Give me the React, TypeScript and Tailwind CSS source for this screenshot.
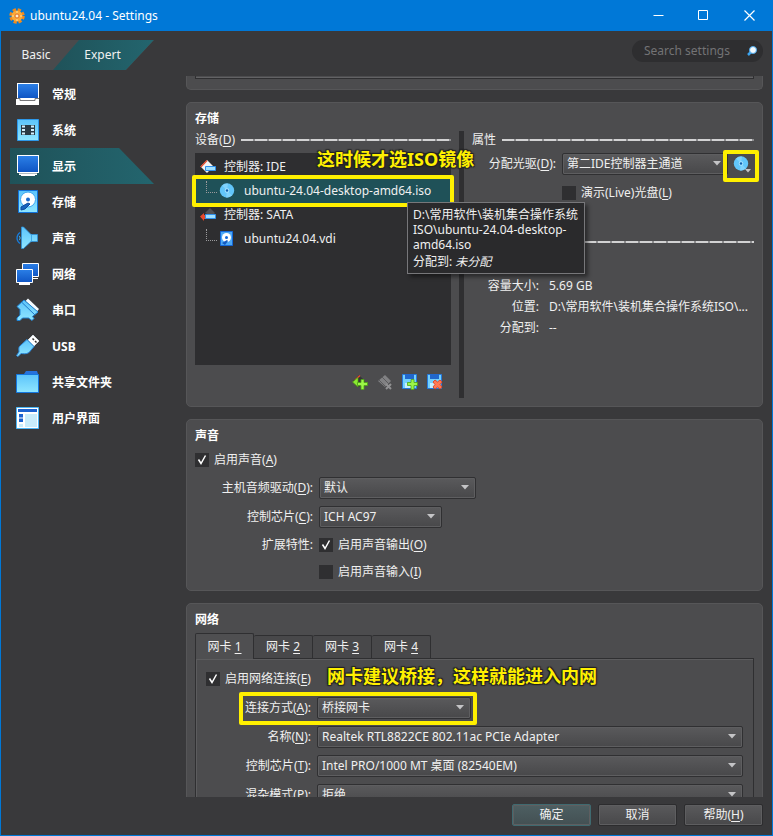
import type { ReactNode } from 'react';

const navItems = [
  { id: 'general', label: '常规' },
  { id: 'system', label: '系统' },
  { id: 'display', label: '显示' },
  { id: 'storage', label: '存储' },
  { id: 'audio', label: '声音' },
  { id: 'network', label: '网络' },
  { id: 'serial', label: '串口' },
  { id: 'usb', label: 'USB' },
  { id: 'folders', label: '共享文件夹' },
  { id: 'ui', label: '用户界面' },
];

function NavIcon({ id }: { id: string }) {
  return (
    <svg viewBox="0 0 24 24" className="size-6 shrink-0">
      <defs>
        <linearGradient id="cyan" x1="0" y1="0" x2="0" y2="1">
          <stop offset="0" stopColor="#5cc4fb" />
          <stop offset="1" stopColor="#8fe6ff" />
        </linearGradient>
        <linearGradient id="blue" x1="0" y1="0" x2="0" y2="1">
          <stop offset="0" stopColor="#2b7fe6" />
          <stop offset="1" stopColor="#0f55c4" />
        </linearGradient>
      </defs>
      {id === 'general' && (
        <>
          <path d="M1 1h22v22H0v-6h1z" fill="#fff" />
          <path d="M2 2h20v14H2z" fill="url(#blue)" />
          <path d="M1 16.500h3v2h15v-2h4" fill="none" stroke="#77777a" />
        </>
      )}
      {id === 'system' && (
        <>
          <path d="M1.500 1.500h21v21h-21z" fill="url(#cyan)" stroke="#2d98ea" />
          <path d="M5 7h14v10H5z" fill="#2a3a44" />
          <path d="M6 8.500h3M6 12h3M6 15.500h3M15 8.500h3M15 12h3M15 15.500h3" stroke="#d4f1ff" strokeWidth="2" />
        </>
      )}
      {id === 'display' && (
        <>
          <path d="M1 1h22v18h-2v2h-2v1H5v-1H3v-2H1z" fill="#fff" />
          <path d="M2 2h20v16H2z" fill="url(#blue)" />
          <path d="M3 19.500h18" stroke="#b4bcc0" />
        </>
      )}
      {id === 'storage' && (
        <>
          <path d="M2.500 .500h19v22h-19z" fill="url(#cyan)" stroke="#1173dc" />
          <circle cx="12" cy="9.500" r="7.500" fill="#fff" stroke="#3da5f0" />
          <circle cx="12" cy="9.500" r="2" fill="#1769cf" />
          <path d="M5 17l7-4 2 1-5 5-4 1z" fill="#1663bd" stroke="#0d4a9d" />
        </>
      )}
      {id === 'audio' && (
        <>
          <path d="M4 6.500c-4 3-4 8 0 11" fill="none" stroke="#187bd8" strokeWidth="1.300" />
          <path d="M5.500 1h2L15 8.500h6.500v7H15L7.500 22.500h-2z" fill="url(#cyan)" stroke="#2d92dc" strokeWidth=".8" />
          <path d="M15.500 8.500v7" stroke="#3fa9e8" />
          <path d="M3 10c1.500 0 1.500 4 0 4" fill="none" stroke="#42b7fa" />
        </>
      )}
      {id === 'network' && (
        <>
          <path d="M6.500 1.500h16v13h-16z" fill="url(#blue)" stroke="#fff" />
          <path d="M17 16.500h5" stroke="#fff" />
          <path d="M.500 7.500h16v13H.500z" fill="url(#blue)" stroke="#fff" />
          <path d="M3 22h11" stroke="#fff" strokeWidth="2" />
        </>
      )}
      {id === 'serial' && (
        <>
          <path d="M12 .500L23 11l-2 2.500L9.500 3z" fill="#f4fbff" />
          <path d="M8 2L1 8.500l3 3V17l-3 3v2.500h3l2.500-2.500h6l3.500 2.500 2-2-1.500-2L22 14z" fill="url(#cyan)" stroke="#2184d4" />
          <path d="M6 4.500L19 17" stroke="#1d78c8" fill="none" />
        </>
      )}
      {id === 'usb' && (
        <>
          <path d="M17 1l6 6-5 5-6-6z" fill="#fff" stroke="#d0d8dc" />
          <path d="M16.500 4.500l1.500 1.500M19 7l1.500 1.500" stroke="#333" strokeWidth="1.500" />
          <path d="M11 5.500l7 7-5 6c-3 2-6 1-8 1l-3 3-1.500-1L3 18c0-3-1-5 2-7z" fill="url(#cyan)" stroke="#2a86d8" />
        </>
      )}
      {id === 'folders' && (
        <>
          <path d="M8 4l2-3h11l1 3v3H8z" fill="#2672dc" />
          <path d="M.500 4.500h22v18H.500z" fill="url(#cyan)" stroke="#1477e0" />
        </>
      )}
      {id === 'ui' && (
        <>
          <path d="M.500 1.500h22v21H.500z" fill="#fff" stroke="#4bb6f6" />
          <path d="M2 3h19v3H2z" fill="#1c62cf" />
          <path d="M9 8h12v13H9z" fill="#c9edfb" />
          <path d="M3 8h4v3.500H3zM3 12.500h4V16H3z" fill="#1c62cf" />
          <path d="M3 18h4v3H3z" fill="#c9edfb" />
        </>
      )}
    </svg>
  );
}

function DiscIcon() {
  return (
    <svg viewBox="0 0 16 16" className="size-4 shrink-0">
      <circle cx="8" cy="7.500" r="7.200" fill="#62c6fa" />
      <path d="M8 7.500L3 2.500a7 7 0 0 1 6-2zM8 7.500l5 5a7 7 0 0 1-6 2z" fill="#9be0ff" opacity=".5" />
      <circle cx="8" cy="7.500" r="2.200" fill="#a8e4ff" />
      <circle cx="8" cy="7.500" r="1.200" fill="#0f5fae" />
    </svg>
  );
}

function HardDiskIcon() {
  return (
    <svg viewBox="0 0 16 16" className="size-4 shrink-0">
      <path d="M1.500 .500h12v14h-12z" fill="#4da8f5" stroke="#1467d8" />
      <circle cx="7.500" cy="6.500" r="4.500" fill="#fff" />
      <circle cx="7.500" cy="6.500" r="1.500" fill="#1467d8" />
      <path d="M3 12l5-3 1 1-3 4z" fill="#145ac0" />
    </svg>
  );
}

function ControllerIcon({ sata }: { sata?: boolean }) {
  return (
    <svg viewBox="0 0 16 16" className="size-4 shrink-0">
      {sata ? (
        <>
          <path d="M5 6l5-5 5 5-3 3z" fill="#505053" />
          <path d="M0 9.500l4-3.500v2h3v4H4v2z" fill="#e5482c" />
        </>
      ) : (
        <>
          <path d="M7 1l6.500 6.500L7 14 .500 7.500z" fill="#f2f2f2" />
          <path d="M.800 8L7 1.500" stroke="#e5482c" strokeWidth="1.300" />
        </>
      )}
      <path d="M5.500 7.500h10v4h-10z" fill="#9fe0ff" stroke="#2f8fec" />
    </svg>
  );
}

function ToolIcon({ kind }: { kind: string }) {
  return (
    <svg viewBox="0 0 16 16" className="size-4">
      {kind === 'add-controller' && (
        <>
          <path d="M7 1l6 6-6 6-6-6z" fill="#353537" />
          <path d="M8 1.500L3 6" stroke="#e74a2c" strokeWidth="1.500" fill="none" />
          <path d="M.500 8L6 3.500V13z" fill="#8ae832" stroke="#4f9d10" strokeWidth=".7" />
        </>
      )}
      {kind === 'remove-controller' && (
        <>
          <path d="M8 1l6 6-6 6-7-6z" fill="#818183" />
          <path d="M5 3l9 9M2 6l8 8" stroke="#5b5b5d" />
          <path d="M9 10l5 5M14 10l-5 5" stroke="#919193" strokeWidth="2" />
        </>
      )}
      {(kind === 'add-disk' || kind === 'remove-disk') && (
        <>
          <path d="M.500 .500h14v14H.500z" fill="#73d1ff" stroke="#2679dd" />
          <path d="M3 0h9v5H3z" fill="#2167cc" />
          <path d="M3 9h7v5H3z" fill="#c6efff" />
        </>
      )}
      {kind.startsWith('add') && (
        <path d="M9 5.500h3v3h3.500v3H12v4H9v-4H5.500v-3H9z" fill="#9cf548" stroke="#4ba313" strokeWidth=".8" />
      )}
      {kind === 'remove-disk' && (
        <path d="M6 8l2-2 2.500 2L13 6l2 2-2 2.500L15 13l-2 2-2.500-2L8 15l-2-2 2-2.500z" fill="#ff7a55" stroke="#e04a2c" />
      )}
    </svg>
  );
}

function Key({ children }: { children: string }) {
  return <>(<span className="underline underline-offset-2">{children}</span>)</>;
}

function Rule() {
  return (
    <span className="h-[2px] flex-1 bg-[repeating-linear-gradient(90deg,#d2d2d3_0_12px,#8c8c8e_12px_14px)]" />
  );
}

function Card({ title, children }: { title: string; children: ReactNode }) {
  return (
    <section className="shrink-0 rounded-[5px] border border-[#565658] bg-[#4c4c4e] p-2">
      <h2 className="font-bold text-white">{title}</h2>
      {children}
    </section>
  );
}

function Combo({ id, value, className = '' }: { id: string; value: string; className?: string }) {
  return (
    <div className={`relative ${className}`}>
      <select
        id={id}
        className="block h-[22px] w-full appearance-none truncate rounded-[2px] border border-[#303032] bg-linear-to-b from-[#5a5a5c] to-[#48484a] pr-5 pl-1 shadow-[inset_0_0_0_1px_#5e5e60] outline-none"
      >
        <option>{value}</option>
      </select>
      <svg viewBox="0 0 8 5" className="pointer-events-none absolute top-2 right-[7px] h-[5px] w-2">
        <path d="M0 0h8L4 4.500z" fill="#c4c4c6" />
      </svg>
    </div>
  );
}

function Check({ id, checked, children }: { id: string; checked?: boolean; children: ReactNode }) {
  return (
    <div className="flex items-center gap-[5px]">
      <span className="relative size-[14px]">
        <input
          id={id}
          type="checkbox"
          defaultChecked={checked}
          className="peer block size-[14px] appearance-none bg-[#2f2f31]"
        />
        <svg
          viewBox="0 0 14 14"
          className="pointer-events-none absolute inset-0 hidden size-[14px] peer-checked:block"
        >
          <path d="M3.500 6.500l2.500 4 4.500-8" fill="none" stroke="#fff" strokeWidth="1.500" />
        </svg>
      </span>
      <label htmlFor={id}>{children}</label>
    </div>
  );
}

function TitleBar() {
  return (
    <header className="flex h-[31px] shrink-0 items-center bg-[#0078d7] pl-2 text-white">
      <svg viewBox="0 0 16 16" className="size-4">
        <circle cx="8" cy="8" r="6" fill="none" stroke="#f08a1c" strokeWidth="3.500" strokeDasharray="3 1.712" />
        <circle cx="8" cy="8" r="5.500" fill="#f9a838" />
        <circle cx="8" cy="8" r="2" fill="#fff0c8" stroke="#e0702c" />
        <path d="M8 3v2M8 11v2M3 8h2M11 8h2" stroke="#ffe39b" />
      </svg>
      <h1 className="ml-[5px] flex-1">ubuntu24.04 - Settings</h1>
      <button aria-label="Minimize" className="flex h-full w-[45px] items-center justify-center">
        <svg viewBox="0 0 11 11" className="size-[11px]"><path d="M.500 5.500h10" stroke="#fff" /></svg>
      </button>
      <button aria-label="Maximize" className="flex h-full w-[45px] items-center justify-center">
        <svg viewBox="0 0 11 11" className="size-[11px]"><path d="M.500 .500h9v9h-9z" fill="none" stroke="#fff" /></svg>
      </button>
      <button aria-label="Close" className="flex h-full w-[46px] items-center justify-center">
        <svg viewBox="0 0 11 11" className="size-[11px]"><path d="M.500 .500l10 10M10.500 .500l-10 10" stroke="#fff" strokeWidth="1.200" /></svg>
      </button>
    </header>
  );
}

function Sidebar() {
  return (
    <nav className="w-36 shrink-0">
      <ul>
        {navItems.map(({ id, label }) => (
          <li key={id}>
            <a
              href={`#${id}`}
              className={`flex h-9 items-center gap-3 pl-[6px] font-bold text-white ${
                id === 'display'
                  ? 'bg-linear-to-r from-[#1f5259] to-[#23656e] [clip-path:polygon(0_0,109px_0,100%_100%,0_100%)]'
                  : ''
              }`}
            >
              <NavIcon id={id} />
              <span className="pt-[2px]">{label}</span>
            </a>
          </li>
        ))}
      </ul>
    </nav>
  );
}

function StorageCard() {
  return (
    <Card title="存储">
      <div className="mt-1 flex gap-2">
        <div className="min-w-0 flex-[256]">
          <div className="mb-1 flex h-[18px] items-center gap-[6px]">
            <span>设备<Key>D</Key></span>
            <Rule />
          </div>
          <div className="relative h-[212px] bg-[#2e2e30] pt-[2px]">
            <ul className="text-[#f0f0f0]">
              <li className="flex h-6 items-center gap-2 pl-[5px]">
                <ControllerIcon />控制器: IDE
              </li>
              <li className="relative flex h-6 items-center bg-[#1f5158] pl-[11px]">
                <span className="mb-2 h-3 w-[11px] border-b border-l border-dotted border-[#9a9a9c]" />
                <span className="ml-[2px]"><DiscIcon /></span>
                <span className="ml-[9px]">ubuntu-24.04-desktop-amd64.iso</span>
                <span className="absolute -inset-x-[3px] -inset-y-1 rounded-[2px] border-4 border-[#fff000]" />
              </li>
              <li className="flex h-6 items-center gap-2 pl-[5px]">
                <ControllerIcon sata />控制器: SATA
              </li>
              <li className="flex h-6 items-center pl-[11px]">
                <span className="mb-2 h-3 w-[11px] border-b border-l border-dotted border-[#9a9a9c]" />
                <span className="ml-[2px]"><HardDiskIcon /></span>
                <span className="ml-[9px]">ubuntu24.04.vdi</span>
              </li>
            </ul>
            <Note className="-top-[6px] left-[122px]">这时候才选ISO镜像</Note>
            <div
              role="tooltip"
              className="absolute top-[49px] left-[212px] z-10 w-[178px] border border-[#77777a] bg-[#2a2a2c] px-[5px] pt-1 pb-1 leading-[15px] text-[#f0f0f0] shadow-[3px_3px_4px_rgba(0,0,0,0.45)]"
            >
              <p className="whitespace-nowrap">D:\常用软件\装机集合操作系统<br />ISO\ubuntu-24.04-desktop-<br />amd64.iso</p>
              <p className="mt-[2px]">分配到: <i>未分配</i></p>
            </div>
          </div>
          <div className="mt-2 flex h-[18px] justify-end gap-[9px] pr-2">
            <button aria-label="添加控制器"><ToolIcon kind="add-controller" /></button>
            <button aria-label="移除控制器" disabled><ToolIcon kind="remove-controller" /></button>
            <button aria-label="添加附件"><ToolIcon kind="add-disk" /></button>
            <button aria-label="移除附件"><ToolIcon kind="remove-disk" /></button>
          </div>
        </div>
        <div className="h-[267px] w-[5px] bg-[#2f2f31]" />
        <div className="min-w-0 flex-[282]">
          <div className="mb-1 flex h-[18px] items-center gap-[6px]">
            <span>属性</span>
            <Rule />
          </div>
          <div className="flex items-center">
            <label htmlFor="drive" className="w-[84px] text-right">分配光驱<Key>D</Key>:</label>
            <Combo id="drive" value="第二IDE控制器主通道" className="ml-[6px] flex-1" />
            <button aria-label="选择虚拟光盘" className="relative flex h-[22px] w-[26px] items-center justify-center">
              <DiscIcon />
              <svg viewBox="0 0 6 4" className="absolute right-[3px] bottom-[2px] h-1 w-[6px]">
                <path d="M0 0h6L3 3.500z" fill="#c4c4c6" />
              </svg>
              <span className="absolute -inset-x-[5px] -top-[3px] -bottom-[7px] rounded-[2px] border-4 border-[#fff000]" />
            </button>
          </div>
          <div className="mt-[10px] ml-[90px]">
            <Check id="live">演示(Live)光盘<Key>L</Key></Check>
          </div>
          <div className="mt-8 flex h-[18px] items-center">
            <Rule />
          </div>
          <dl className="mt-[27px] grid grid-cols-[67px_1fr] gap-x-[10px] gap-y-[5px]">
            <dt className="text-right whitespace-nowrap">容量大小:</dt>
            <dd>5.69 GB</dd>
            <dt className="text-right">位置:</dt>
            <dd className="whitespace-nowrap">D:\常用软件\装机集合操作系统ISO\...</dd>
            <dt className="text-right">分配到:</dt>
            <dd>--</dd>
          </dl>
        </div>
      </div>
    </Card>
  );
}

function AudioCard() {
  return (
    <Card title="声音">
      <div className="mt-2">
        <Check id="audio-on" checked>启用声音<Key>A</Key></Check>
      </div>
      <div className="mt-[9px] grid grid-cols-[118px_1fr] items-center gap-x-[6px] gap-y-[7px]">
        <label htmlFor="host" className="text-right">主机音频驱动<Key>D</Key>:</label>
        <Combo id="host" value="默认" className="w-[157px]" />
        <label htmlFor="audio-chip" className="text-right">控制芯片<Key>C</Key>:</label>
        <Combo id="audio-chip" value="ICH AC97" className="w-[123px]" />
        <span className="text-right">扩展特性:</span>
        <div className="py-[2px]"><Check id="audio-out" checked>启用声音输出<Key>O</Key></Check></div>
        <div className="col-start-2 py-[2px]"><Check id="audio-in">启用声音输入<Key>I</Key></Check></div>
      </div>
    </Card>
  );
}

function NetworkCard() {
  return (
    <Card title="网络">
      <div role="tablist" className="mt-[5px] flex items-end">
        <button role="tab" aria-selected="true" className="relative z-10 -mb-px h-[26px] w-[59px] rounded-t-[2px] border border-b-0 border-[#2f2f31] bg-[#4f4f51]">
          网卡 <u className="underline-offset-2">1</u>
        </button>
        {['2', '3', '4'].map((n) => (
          <button key={n} role="tab" aria-selected="false" className="h-[23px] w-[59px] rounded-t-[2px] border border-b-0 border-l-0 border-[#2f2f31] bg-[#48484a]">
            网卡 <u className="underline-offset-2">{n}</u>
          </button>
        ))}
      </div>
      <div role="tabpanel" className="relative border border-[#2f2f31] px-[10px] pt-3 pb-4 shadow-[inset_1px_1px_0_#5c5c5e]">
        <Check id="net-on" checked>启用网络连接<Key>E</Key></Check>
        <Note className="top-[5px] left-[131px]">网卡建议桥接，这样就能进入内网</Note>
        <div className="mt-[10px] grid grid-cols-[105px_1fr] items-center gap-x-[6px] gap-y-[7px]">
          <label htmlFor="attach" className="text-right">连接方式<Key>A</Key>:</label>
          <div className="relative w-[154px]">
            <Combo id="attach" value="桥接网卡" />
            <span className="pointer-events-none absolute -top-[5px] -right-[6px] -bottom-[6px] -left-[78px] rounded-[2px] border-4 border-[#fff000]" />
          </div>
          <label htmlFor="name" className="text-right">名称<Key>N</Key>:</label>
          <Combo id="name" value="Realtek RTL8822CE 802.11ac PCIe Adapter" />
          <label htmlFor="net-chip" className="text-right">控制芯片<Key>T</Key>:</label>
          <Combo id="net-chip" value="Intel PRO/1000 MT 桌面 (82540EM)" />
          <label htmlFor="promisc" className="text-right">混杂模式<Key>P</Key>:</label>
          <Combo id="promisc" value="拒绝" />
        </div>
      </div>
    </Card>
  );
}

function Note({ className, children }: { className: string; children: string }) {
  return (
    <p
      className={`pointer-events-none absolute z-20 text-lg leading-6 font-bold whitespace-nowrap text-[#fff000] [text-shadow:1px_1px_1px_#222,-1px_-1px_1px_#222,1px_-1px_1px_#222,-1px_1px_1px_#222] ${className}`}
    >
      {children}
    </p>
  );
}

const footerButton =
  'h-[22px] w-[79px] rounded-[2px] border bg-linear-to-b shadow-[inset_0_0_0_1px_#5e5e60]';

export default function App() {
  return (
    <div className="flex h-screen flex-col border-x border-b border-[#0078d7] bg-[#39393b] font-['Noto_Sans','Noto_Sans_CJK_SC',sans-serif] text-xs leading-4 text-[#f0f0f0]">
      <TitleBar />
      <div className="flex shrink-0 items-center justify-between px-[9px] pt-[9px]">
        <div className="flex h-[30px] w-36 bg-[#4a4a4c] [clip-path:polygon(0_0,100%_0,116px_100%,0_100%)]">
          <button className="w-[52px]">Basic</button>
          <button className="-ml-[9px] flex-1 bg-linear-to-r from-[#1f5259] to-[#23656e] pr-[2px] [clip-path:polygon(26px_0,100%_0,73px_100%,0_100%)]">
            Expert
          </button>
        </div>
        <div className="mb-2 flex h-[22px] w-[131px] items-center rounded-full bg-[#2e2e30] pr-[6px] pl-3">
          <input
            aria-label="Search settings"
            placeholder="Search settings"
            className="min-w-0 flex-1 bg-transparent placeholder-[#737375] outline-none"
          />
          <svg viewBox="0 0 10 10" className="size-[10px] shrink-0">
            <path d="M1 9l3-3" stroke="#3ba4ee" strokeWidth="2.500" />
            <circle cx="6" cy="4" r="3.500" fill="#f4fbff" stroke="#4aa8ec" />
          </svg>
        </div>
      </div>
      <div className="flex min-h-0 flex-1 gap-8 px-[9px] pt-[6px]">
        <Sidebar />
        <main className="flex min-w-0 flex-1 flex-col gap-3 overflow-hidden">
          <div className="h-[14px] shrink-0 rounded-b-[5px] border border-t-0 border-[#565658] bg-[#4c4c4e] px-2">
            <div className="h-[3px] border border-t-0 border-[#2f2f31] shadow-[inset_0_-1px_0_#626264]" />
          </div>
          <StorageCard />
          <AudioCard />
          <NetworkCard />
        </main>
      </div>
      <footer className="flex shrink-0 justify-end gap-[7px] px-[9px] pt-[7px] pb-[9px]">
        <button className={`${footerButton} border-[#3f6a70] from-[#4d5f62] to-[#435053]`}>确定</button>
        <button className={`${footerButton} border-[#2c2c2e] from-[#5a5a5c] to-[#48484a]`}>取消</button>
        <button className={`${footerButton} border-[#2c2c2e] from-[#5a5a5c] to-[#48484a]`}>帮助<Key>H</Key></button>
      </footer>
    </div>
  );
}
